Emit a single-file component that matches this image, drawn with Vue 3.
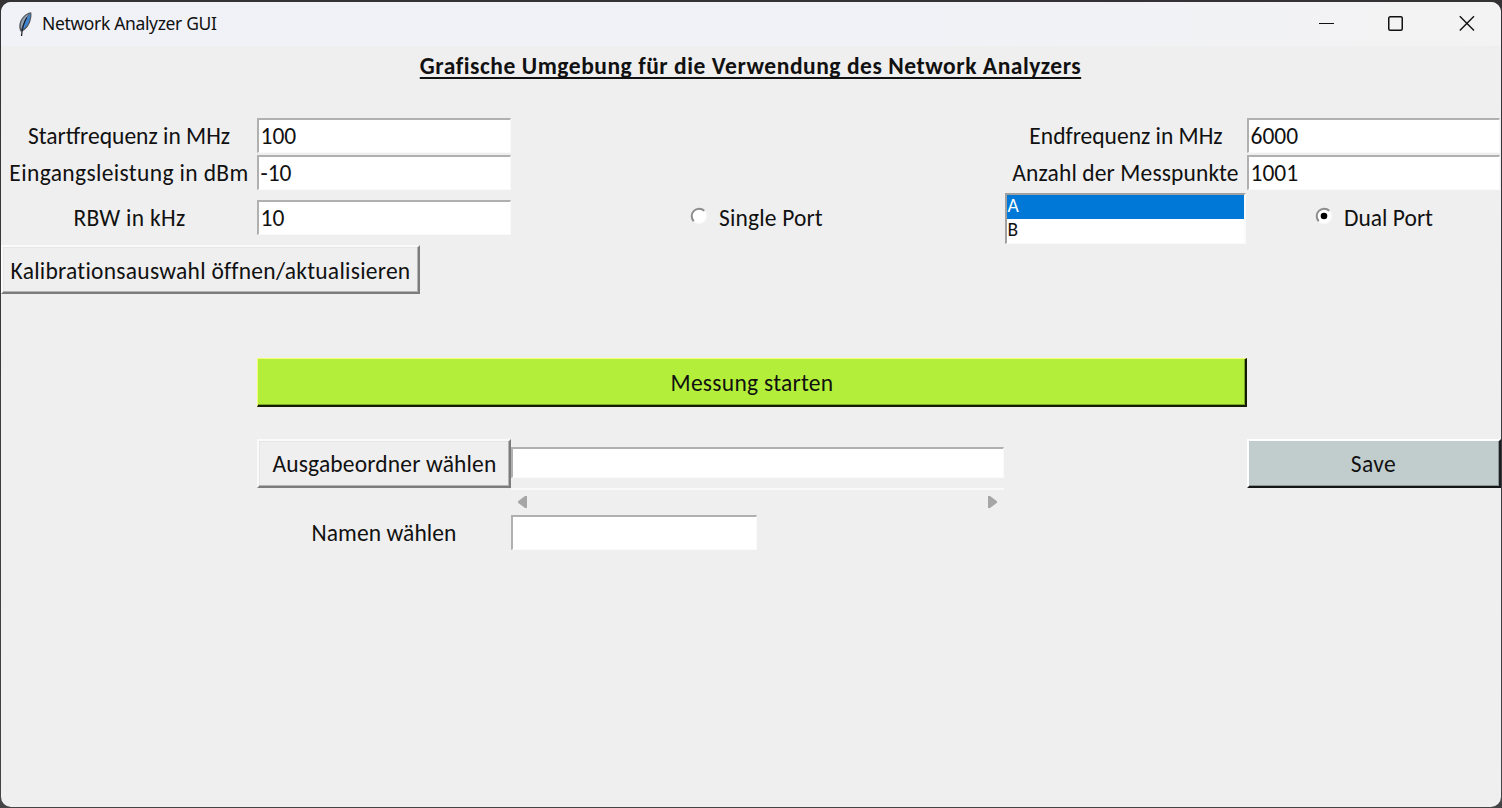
<script setup>
import { ref } from 'vue'

const start = ref('100')
const power = ref('-10')
const rbw = ref('10')
const end = ref('6000')
const points = ref('1001')
const folder = ref('')
const fileName = ref('')
const ports = ['A', 'B']
const selected = ref('A')
const mode = ref('dual')
</script>

<template>
  <div class="desktop">
    <div class="window">
      <header class="titlebar">
        <svg class="feather" width="18" height="28" viewBox="0 0 18 28">
          <path d="M16.200 2.200C11.500 2.500 6.500 7 4.800 12.500c-.9 3.200-.7 6.300.6 8.800l1 .5c4-1.600 7.400-5.600 8.900-10.300 1.100-3.500 1.600-6.800.9-9.300z" fill="#55585d" />
          <path d="M14 3.800C10.500 5.200 7.300 8.800 6.200 12.800c-.6 2.200-.6 4.300 0 6.200C8.300 13.500 10.500 8.500 14 3.800z" fill="#93a3b5" />
          <path d="M15.300 3.200C11.500 7.500 8.500 13.500 6.800 20c3.500-1.700 6.200-5.200 7.400-9.100.9-2.900 1.300-5.500 1.100-7.700z" fill="#3f86d2" />
          <path d="M11.800 7.500C9 12 7.300 16.500 6.500 26" fill="none" stroke="#1c222c" stroke-width="1.300" />
        </svg>
        <span class="caption">Network Analyzer GUI</span>
        <div class="controls">
          <svg width="16" height="16" viewBox="0 0 16 16"><path d="M0 8.500H15" /></svg>
          <svg width="16" height="16" viewBox="0 0 16 16"><rect x=".75" y="1.750" width="13.500" height="13.500" rx="1.500" stroke-width="1.500" /></svg>
          <svg width="16" height="16" viewBox="0 0 16 16"><path d="M.8 1.300L15 15.500M15 1.300L.8 15.500" stroke-width="1.400" /></svg>
        </div>
      </header>

      <main class="form">
        <h1 class="heading"><span>Grafische Umgebung für die Verwendung des Network Analyzers</span></h1>

        <label class="label r2 c1">Startfrequenz in MHz</label>
        <input v-model="start" class="entry r2 c2" />
        <label class="label r2 c5">Endfrequenz in MHz</label>
        <input v-model="end" class="entry r2 c6" />

        <label class="label r3 c1 t-power">Eingangsleistung in dBm</label>
        <input v-model="power" class="entry r3 c2" />
        <label class="label r3 c5 t-points">Anzahl der Messpunkte</label>
        <input v-model="points" class="entry r3 c6" />

        <label class="label r4 c1 t-rbw">RBW in kHz</label>
        <input v-model="rbw" class="entry mid r4 c2" />
        <div class="radio r4 single" @click="mode = 'single'">
          <svg width="18" height="18" viewBox="0 0 18 18">
            <circle cx="9" cy="9" r="8" fill="#fafafa" />
            <circle cx="9" cy="9" r="6.500" fill="#fff" />
            <path d="M3.700 14.300A7.500 7.500 0 0 1 14.300 3.700" class="ring" />
            <circle v-if="mode === 'single'" cx="9" cy="9" r="3.300" />
          </svg>
          <span class="t-single">Single Port</span>
        </div>
        <ul class="list r4 c5">
          <li v-for="p in ports" :key="p" :class="{ on: p === selected }" @click="selected = p">{{ p }}</li>
        </ul>
        <div class="radio r4 c6" @click="mode = 'dual'">
          <svg width="18" height="18" viewBox="0 0 18 18">
            <circle cx="9" cy="9" r="8" fill="#fafafa" />
            <circle cx="9" cy="9" r="6.500" fill="#fff" />
            <path d="M3.700 14.300A7.500 7.500 0 0 1 14.300 3.700" class="ring" />
            <circle v-if="mode === 'dual'" cx="9" cy="9" r="3.300" />
          </svg>
          <span>Dual Port</span>
        </div>

        <button class="button calib">Kalibrationsauswahl öffnen/aktualisieren</button>
        <button class="button go">Messung starten</button>

        <button class="button choose">Ausgabeordner wählen</button>
        <input v-model="folder" class="entry folder" />
        <button class="button save">Save</button>

        <div class="scroll">
          <svg width="11" height="14" viewBox="0 0 11 14"><path d="M10 1v12H8L1 7.800V6.200L8 1z" /></svg>
          <svg width="11" height="14" viewBox="0 0 11 14"><path d="M1 1v12h2l7-5.200V6.200L3 1z" /></svg>
        </div>

        <label class="label name">Namen wählen</label>
        <input v-model="fileName" class="entry file" />
      </main>
    </div>
  </div>
</template>

<style>
body { margin: 0; background: #29282a; overflow: hidden; }
</style>

<style scoped>
* { box-sizing: border-box; }
.desktop {
  height: 808px;
  padding: 2px 1px 1px;
  background: linear-gradient(#343235, #444345);
}
.window {
  height: 805px;
  border-radius: 10px;
  overflow: hidden;
  background: #efefef;
}
.titlebar {
  height: 44px;
  display: flex;
  align-items: center;
  padding: 0 26px 2px 14px;
  background: linear-gradient(90deg, #f0f2f8, #f1f2f7 60%, #f3f3f3);
}
.feather { margin-top: 2px; }
.caption {
  margin-left: 9px;
  font: 17.500px "Noto Sans", sans-serif;
  letter-spacing: -0.350px;
  color: #111;
}
.controls { margin-left: auto; display: flex; gap: 54px; }
.controls svg { fill: none; stroke: #111; stroke-width: 1.200; overflow: visible; }
.controls svg:nth-child(2) { margin: 0 1px 0 -1px; }
.form {
  display: grid;
  grid-template-columns: 256px 254px 246px 248px 242px 254px;
  grid-template-rows: 72px 37px 38px 52px 50px 63px 50px 31px 50px 26px 36px;
  font-family: Carlito, Lato, sans-serif;
  font-size: 23.500px;
  color: #111;
}
.heading {
  grid-area: 1 / 1 / 2 / 7;
  margin: 0;
  height: 40px;
  padding-right: 1px;
  display: flex;
  align-items: center;
  justify-content: center;
  font-size: 23.500px;
  letter-spacing: 0.550px;
  font-weight: 700;
  text-decoration: underline;
  text-decoration-thickness: 2px;
  text-underline-offset: 3px;
  text-decoration-skip-ink: none;
}
.r2 { grid-row: 2; }
.r3 { grid-row: 3; }
.r4 { grid-row: 4; }
.c1 { grid-column: 1; }
.c2 { grid-column: 2; }
.c5 { grid-column: 5; }
.c6 { grid-column: 6; }
.t-power { letter-spacing: 0.360px; }
.t-rbw { letter-spacing: 0.300px; padding-left: 1px; }
.t-points { letter-spacing: 0.120px; padding-right: 1px; }
.t-single { letter-spacing: 0.150px; }
.label {
  height: 36px;
  align-self: start;
  display: flex;
  align-items: center;
  justify-content: center;
  white-space: nowrap;
}
.r4.label { margin-top: 7px; }
.entry {
  width: 100%;
  height: 35px;
  align-self: start;
  margin: 0;
  padding: 0 0 0 1.500px;
  border: solid;
  border-width: 2px 1px 1px 2px;
  border-color: #b0b0b0 #fafafa #fafafa #b0b0b0;
  border-radius: 0;
  background: #fff;
  font: inherit;
  color: inherit;
  outline: none;
}
.entry.mid { margin-top: 7px; }
.entry.c6 { width: 253px; }
.radio {
  height: 50px;
  display: flex;
  align-items: center;
  justify-content: center;
  gap: 11px;
  white-space: nowrap;
}
.radio.single { grid-column: 3 / 5; padding-right: 3px; }
.radio svg { margin-top: -4px; }
.radio circle { stroke: none; }
.ring { fill: none; stroke: #8c8c8c; stroke-width: 2; }
.list {
  width: 241px;
  height: 51px;
  margin: 0;
  padding: 0;
  list-style: none;
  border: solid;
  border-width: 2px 2px 1px 2px;
  border-color: #a0a0a0 #fafafa #fafafa #a0a0a0;
  background: #fff;
  font-size: 19.500px;
}
.list li { height: 24px; line-height: 21px; padding-left: 0.500px; }
.list .on { background: #0078d7; color: #fff; }
.button {
  margin: 0;
  padding: 0;
  height: 49px;
  border: solid;
  border-width: 2px;
  border-color: #fafafa #7c7c7c #7c7c7c #fafafa;
  box-shadow: inset -1px -1px #b4b4b4, inset 1px 1px #e6e6e6;
  border-radius: 0;
  background: #efefef;
  font: inherit;
  color: inherit;
  white-space: nowrap;
}
.calib { grid-area: 5 / 1 / 6 / 3; width: 419px; padding-top: 2px; letter-spacing: 0.260px; }
.go {
  grid-area: 7 / 2 / 8 / 6;
  width: 990px;
  padding: 2px 0 0 1px;
  letter-spacing: 0.270px;
  background: #b3ef3a;
  border-color: #f4ff7c #141c03 #141c03 #f4ff7c;
  border-width: 1px 2px 2px 1px;
  box-shadow: inset -1px -1px #7ba628;
}
.choose { grid-area: 9 / 2 / 10 / 3; padding-left: 1px; letter-spacing: 0.160px; }
.folder { grid-area: 9 / 3 / 10 / 5; height: 31px; width: 493px; margin-top: 8px; }
.save {
  grid-area: 9 / 6 / 10 / 7;
  padding-right: 1px;
  letter-spacing: 0.400px;
  background: #c1cdcd;
  border-color: #fff #1c1f1f #151717 #fff;
  box-shadow: inset -1px -1px #8a9494;
}
.scroll {
  grid-area: 10 / 3 / 11 / 5;
  width: 493px;
  height: 27px;
  margin-top: -1px;
  padding: 0 6px 2px;
  border-top: 2px solid #f9f9f9;
  display: flex;
  justify-content: space-between;
  align-items: center;
}
.scroll svg { fill: #a6a6a6; }
.name { grid-area: 11 / 2 / 12 / 3; letter-spacing: 0.080px; }
.file { grid-area: 11 / 3 / 12 / 4; }
</style>
